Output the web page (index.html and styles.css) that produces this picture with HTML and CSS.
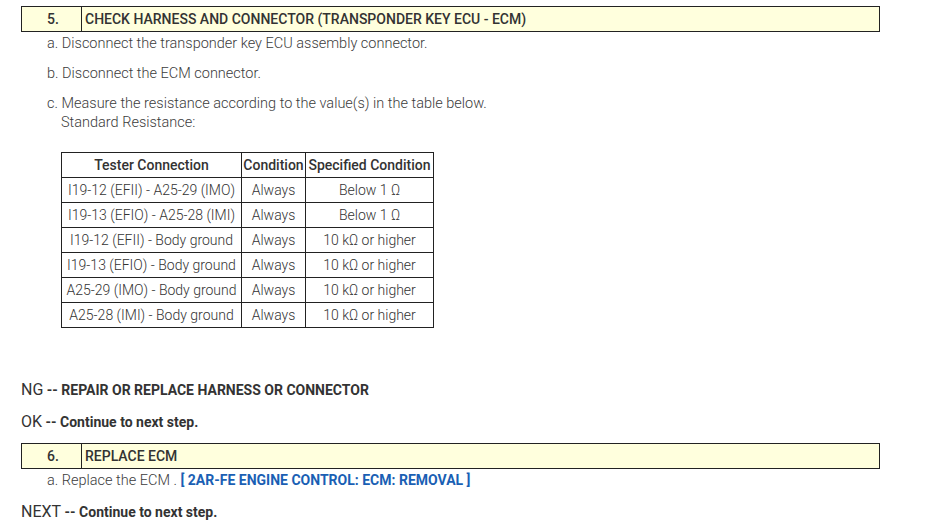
FILE: index.html
```html
<!DOCTYPE html>
<html>
<head>
<meta charset="utf-8">
<link rel="stylesheet" href="styles.css">
</head>
<body>
<div class="page">
  <div class="step-head"><div class="num">5.</div><div class="title">CHECK HARNESS AND CONNECTOR (TRANSPONDER KEY ECU - ECM)</div></div>
  <p class="item first">a. Disconnect the transponder key ECU assembly connector.</p>
  <p class="item">b. Disconnect the ECM connector.</p>
  <p class="item">c. Measure the resistance according to the value(s) in the table below.<span class="sub">Standard Resistance:</span></p>
  <table class="spec">
    <tr><th>Tester Connection</th><th>Condition</th><th>Specified Condition</th></tr>
    <tr><td>I19-12 (EFII) - A25-29 (IMO)</td><td>Always</td><td>Below 1 Ω</td></tr>
    <tr><td>I19-13 (EFIO) - A25-28 (IMI)</td><td>Always</td><td>Below 1 Ω</td></tr>
    <tr><td>I19-12 (EFII) - Body ground</td><td>Always</td><td>10 kΩ or higher</td></tr>
    <tr><td>I19-13 (EFIO) - Body ground</td><td>Always</td><td>10 kΩ or higher</td></tr>
    <tr><td>A25-29 (IMO) - Body ground</td><td>Always</td><td>10 kΩ or higher</td></tr>
    <tr><td>A25-28 (IMI) - Body ground</td><td>Always</td><td>10 kΩ or higher</td></tr>
  </table>
  <p class="result ng"><span class="code">NG</span> <b>-- REPAIR OR REPLACE HARNESS OR CONNECTOR</b></p>
  <p class="result ok"><span class="code">OK</span> <b>-- Continue to next step.</b></p>
  <div class="step-head second"><div class="num">6.</div><div class="title">REPLACE ECM</div></div>
  <p class="item first">a. Replace the ECM . <a class="link">[ 2AR-FE ENGINE CONTROL: ECM: REMOVAL ]</a></p>
  <p class="result next"><span class="code">NEXT</span> <b>-- Continue to next step.</b></p>
</div>
</body>
</html>
```
FILE: styles.css
```css
html, body { margin: 0; padding: 0; background: #fff; }
body { font-family: Roboto, "Open Sans", sans-serif; color: #444; }
.page { padding: 6px 0 0 21px; width: 859px; }
.step-head {
  display: flex;
  height: 24px;
  border: 1px solid #222;
  background: #ffffdd;
  font-size: 14px;
  font-weight: 500;
  color: #333;
  line-height: 24px;
}
.step-head .num { width: 60px; box-sizing: border-box; border-right: 1px solid #222; padding-left: 25px; }
.step-head .title { padding-left: 3px; }
.item { margin: 0; padding-left: 26px; font-size: 14.5px; font-weight: 300; color: #3c3c3c; line-height: 19px; margin-top: 11px; }
.item.first { margin-top: 2px; }
.item .sub { display: block; padding-left: 14px; }
.spec { margin: 20px 0 0 40px; border-collapse: collapse; font-size: 14px; font-weight: 300; color: #333; }
.spec th, .spec td { border: 1px solid #222; height: 24px; padding: 0 1px; text-align: center; white-space: nowrap; line-height: 23px; }
.spec th { font-weight: 500; }
.spec th:nth-child(1) { width: 177px; }
.spec th:nth-child(2) { width: 61px; }
.spec th:nth-child(3) { width: 125px; }
.result { margin: 0; font-size: 14px; color: #333; line-height: 20px; }
.result .code { font-size: 16px; font-weight: 400; }
.result b { font-weight: 700; }
.result.ng { margin-top: 52px; }
.result.ok { margin-top: 12px; }
.step-head.second { margin-top: 11px; }
.result.next { margin-top: 12px; }
.link { color: #1a5fb4; font-weight: 700; font-size: 14px; }
```
